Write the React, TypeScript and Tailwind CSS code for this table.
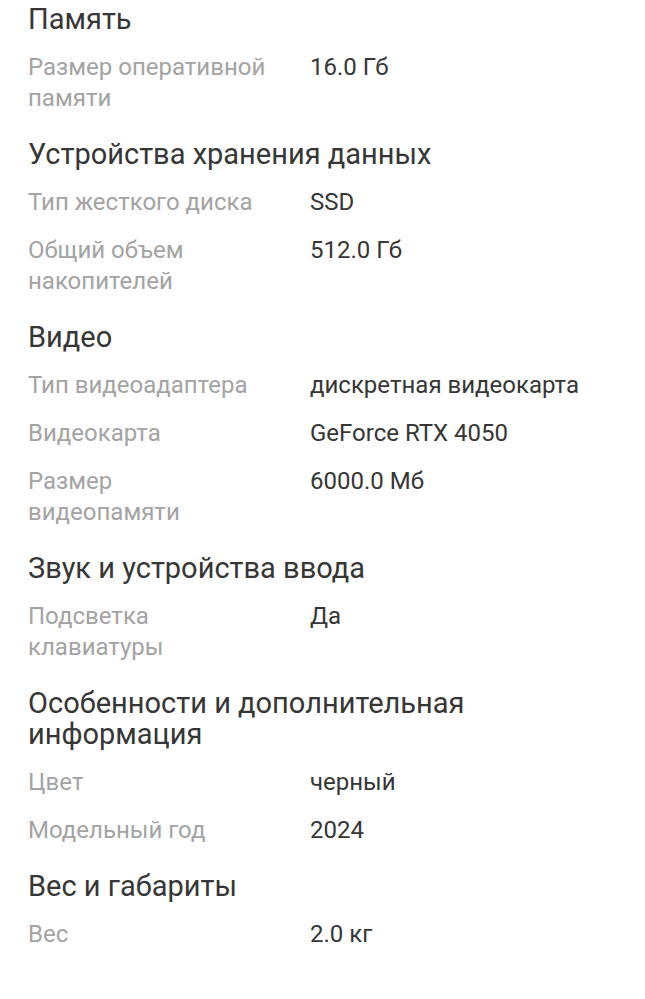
import React from 'react';

type Row = { label: string; value: string };
type Section = { title: string; rows: Row[] };

const sections: Section[] = [
  {
    title: 'Память',
    rows: [{ label: 'Размер оперативной памяти', value: '16.0 Гб' }],
  },
  {
    title: 'Устройства хранения данных',
    rows: [
      { label: 'Тип жесткого диска', value: 'SSD' },
      { label: 'Общий объем накопителей', value: '512.0 Гб' },
    ],
  },
  {
    title: 'Видео',
    rows: [
      { label: 'Тип видеоадаптера', value: 'дискретная видеокарта' },
      { label: 'Видеокарта', value: 'GeForce RTX 4050' },
      { label: 'Размер видеопамяти', value: '6000.0 Мб' },
    ],
  },
  {
    title: 'Звук и устройства ввода',
    rows: [{ label: 'Подсветка клавиатуры', value: 'Да' }],
  },
  {
    title: 'Особенности и дополнительная информация',
    rows: [
      { label: 'Цвет', value: 'черный' },
      { label: 'Модельный год', value: '2024' },
    ],
  },
  {
    title: 'Вес и габариты',
    rows: [{ label: 'Вес', value: '2.0 кг' }],
  },
];

export default function App() {
  return (
    <div className="min-h-[999px] w-full bg-white pt-[4px] pl-[28px] pr-[40px] font-['Roboto',sans-serif]">
      <div className="flex flex-col gap-[25px]">
        {sections.map((s) => (
          <section key={s.title}>
            <h2 className="max-w-[470px] text-[29px] leading-[31px] text-[#363636]">{s.title}</h2>
            {s.rows.map((r) => (
              <div key={r.label} className="mt-[17px] grid grid-cols-[240px_1fr] gap-x-[42px] text-[24px] leading-[31px]">
                <div className="text-[#a3a3a3]">{r.label}</div>
                <div className="text-[#363636]">{r.value}</div>
              </div>
            ))}
          </section>
        ))}
      </div>
    </div>
  );
}
